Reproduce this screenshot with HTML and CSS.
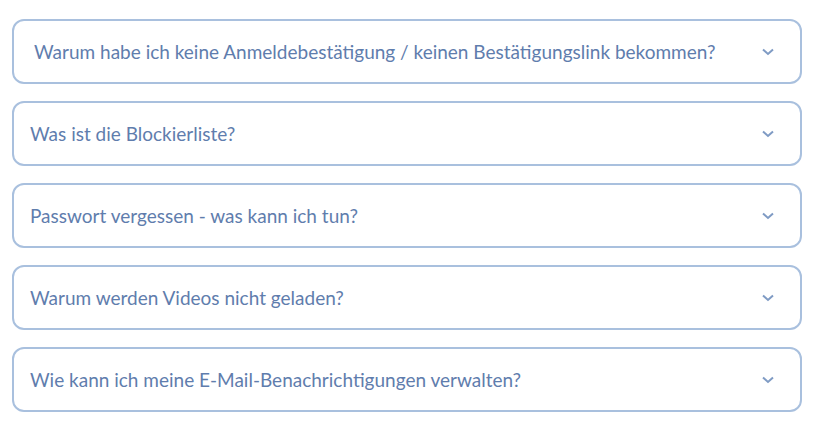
FILE: index.html
```html
<!DOCTYPE html>
<html lang="de">
<head>
<meta charset="utf-8">
<link rel="stylesheet" href="styles.css">
</head>
<body>
<div class="faq">
  <div class="item item-first"><span class="q">Warum habe ich keine Anmeldebestätigung / keinen Bestätigungslink bekommen?</span><svg class="chev" width="12" height="8" viewBox="0 0 12 8"><path d="M1 1.5 L6 6 L11 1.5" fill="none" stroke="#7f9bc4" stroke-width="2"/></svg></div>
  <div class="item"><span class="q">Was ist die Blockierliste?</span><svg class="chev" width="12" height="8" viewBox="0 0 12 8"><path d="M1 1.5 L6 6 L11 1.5" fill="none" stroke="#7f9bc4" stroke-width="2"/></svg></div>
  <div class="item"><span class="q">Passwort vergessen - was kann ich tun?</span><svg class="chev" width="12" height="8" viewBox="0 0 12 8"><path d="M1 1.5 L6 6 L11 1.5" fill="none" stroke="#7f9bc4" stroke-width="2"/></svg></div>
  <div class="item"><span class="q">Warum werden Videos nicht geladen?</span><svg class="chev" width="12" height="8" viewBox="0 0 12 8"><path d="M1 1.5 L6 6 L11 1.5" fill="none" stroke="#7f9bc4" stroke-width="2"/></svg></div>
  <div class="item"><span class="q">Wie kann ich meine E-Mail-Benachrichtigungen verwalten?</span><svg class="chev" width="12" height="8" viewBox="0 0 12 8"><path d="M1 1.5 L6 6 L11 1.5" fill="none" stroke="#7f9bc4" stroke-width="2"/></svg></div>
</div>
</body>
</html>
```
FILE: styles.css
```css
html, body { margin: 0; padding: 0; background: #fff; }
body { font-family: "Lato", "Open Sans", sans-serif; }
.faq {
  display: flex;
  flex-direction: column;
  gap: 17px;
  padding: 19px 14px 0 12px;
}
.item {
  box-sizing: border-box;
  height: 65px;
  border: 2px solid #a9c0de;
  border-radius: 12px;
  display: flex;
  align-items: center;
  justify-content: space-between;
  padding: 0 26px 0 16px;
}
.item-first { padding-left: 20px; }
.q {
  color: #5f7dad;
  font-size: 19px;
  letter-spacing: 0;
}
.chev { display: block; }
```
